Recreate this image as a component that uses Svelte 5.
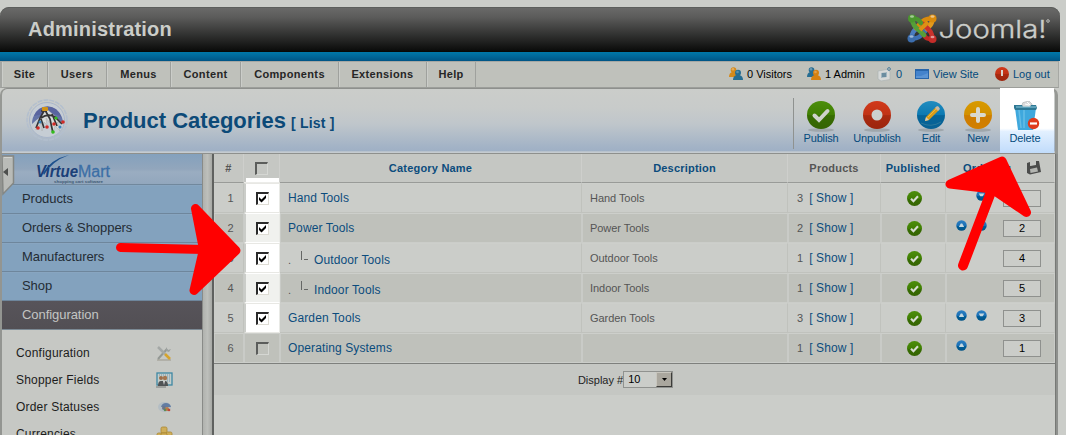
<script>
  const menu = [
    ['Site', 46], ['Users', 59], ['Menus', 64], ['Content', 70],
    ['Components', 98], ['Extensions', 88], ['Help', 49]
  ];
  const groups = ['Products', 'Orders & Shoppers', 'Manufacturers', 'Shop', 'Configuration'];
  const links = [
    ['Configuration', 'tools'], ['Shopper Fields', 'card'],
    ['Order Statuses', 'status'], ['Currencies', 'coins']
  ];
  const rows = [
    { name: 'Hand Tools', desc: 'Hand Tools', n: 3, order: '', up: false, down: true, on: true },
    { name: 'Power Tools', desc: 'Power Tools', n: 2, order: 2, up: true, down: true, on: true },
    { name: 'Outdoor Tools', desc: 'Outdoor Tools', n: 1, order: 4, child: true, on: true },
    { name: 'Indoor Tools', desc: 'Indoor Tools', n: 1, order: 5, child: true, on: true },
    { name: 'Garden Tools', desc: 'Garden Tools', n: 3, order: 3, up: true, down: true, on: true },
    { name: 'Operating Systems', desc: '', n: 1, order: 1, up: true, on: false }
  ];
</script>

{#snippet users(a, b)}
  <svg width="16" height="16" viewBox="0 0 16 16">
    <path d="M1 11q0-4 3-5h3q3 1 3 5z" fill={a} />
    <circle cx="5.5" cy="4" r="2.8" fill={a} />
    <circle cx="5" cy="3.3" r="1.3" fill="#fff" opacity=".3" />
    <path d="M5 14q0-4 3.500-5h3q3.500 1 3.500 5z" fill={b} />
    <circle cx="10" cy="6.800" r="3" fill={b} />
    <circle cx="9.500" cy="6" r="1.300" fill="#fff" opacity=".25" />
  </svg>
{/snippet}

{#snippet check()}
  <svg width="15" height="15" viewBox="0 0 28 28">
    <circle cx="14" cy="14" r="14" fill="url(#green)" />
    <path d="M7.500 14.500l4.500 4.500 8.500-9" fill="none" stroke="#d6dbd1" stroke-width="4" />
  </svg>
{/snippet}

{#snippet move(down)}
  <svg width="11" height="11" viewBox="0 0 11 11">
    <circle cx="5.500" cy="5.500" r="5.200" fill="url(#blue)" />
    {#if down}
      <path d="M2.700 3.500h5.600L6.700 6.200H4.300z" fill="#c5d8df" />
    {:else}
      <path d="M2.800 7l2-3.600h1.400L8.200 7z" fill="#c5d8df" />
    {/if}
  </svg>
{/snippet}

<svg width="0" height="0" class="defs">
  <defs>
    <linearGradient id="green" x2="0" y2="1"><stop offset="0" stop-color="#4c8e0b" /><stop offset=".5" stop-color="#407f03" /><stop offset=".52" stop-color="#376d02" /><stop offset="1" stop-color="#356402" /></linearGradient>
    <linearGradient id="red" x2="0" y2="1"><stop offset="0" stop-color="#d1391b" /><stop offset=".5" stop-color="#c13215" /><stop offset=".52" stop-color="#aa2a10" /><stop offset="1" stop-color="#9c250d" /></linearGradient>
    <linearGradient id="blue" x2="0" y2="1"><stop offset="0" stop-color="#2a7fc4" /><stop offset=".5" stop-color="#1c70b5" /><stop offset=".55" stop-color="#005f9c" /><stop offset="1" stop-color="#005285" /></linearGradient>
    <linearGradient id="cyan" x2="0" y2="1"><stop offset="0" stop-color="#218cbf" /><stop offset=".5" stop-color="#0c79b2" /><stop offset=".52" stop-color="#056499" /><stop offset="1" stop-color="#086295" /></linearGradient>
    <linearGradient id="gold" x2="0" y2="1"><stop offset="0" stop-color="#d89a00" /><stop offset=".5" stop-color="#d29000" /><stop offset=".52" stop-color="#ce7d00" /><stop offset="1" stop-color="#d27f00" /></linearGradient>
  </defs>
</svg>

<div class="page">
  <header>
    <h1>Administration</h1>
    <svg class="joomla" width="146" height="34" viewBox="0 0 146 34">
      <g fill="none" stroke-linecap="round" stroke-width="4.600">
        <path d="M4.500 25.500C13 26 14 22 21 15" stroke="#3d70b3" />
        <path d="M4.500 25.500C5 17 9 17 13 12" stroke="#4a7dc0" />
        <path d="M25.500 5.500C17 5 15 9 9 15" stroke="#d98a0c" />
        <path d="M25.500 5.500C25 13 23 12 20 16" stroke="#e39a1c" />
        <path d="M25.500 26C25 18 22 17 16 11" stroke="#c9322c" />
        <path d="M25.500 26C18 26 19 24 16 21" stroke="#c02a26" />
        <path d="M5 5.500C6 14 9 14 17 22" stroke="#559f38" />
        <path d="M5 5.500C12 5 12 8 14 10" stroke="#4b9631" />
        <path d="M13 17l8-8" stroke="#dc9014" stroke-width="4" stroke-linecap="butt" />
      </g>
      <circle cx="5" cy="5.500" r="4" fill="#4b962f" /><circle cx="25.500" cy="5.500" r="4" fill="#d98a0c" />
      <circle cx="4.500" cy="25.500" r="4" fill="#3c6ead" /><circle cx="25.500" cy="26" r="4" fill="#c52d29" />
      <g fill="#fff" opacity=".5"><ellipse cx="5" cy="3.500" rx="2" ry="1.200" /><ellipse cx="25.500" cy="3.500" rx="2" ry="1.200" /><ellipse cx="4.500" cy="23.500" rx="2" ry="1.200" /><ellipse cx="25.500" cy="24" rx="2" ry="1.200" /></g>
      <text x="31.500" y="24.500" textLength="108" lengthAdjust="spacingAndGlyphs">Joomla!</text>
      <circle cx="141" cy="8" r="1.300" fill="none" stroke="#c9cbc7" stroke-width=".9" />
    </svg>
  </header>
  <div class="stripe"></div>

  <nav>
    {#each menu as [label, w]}
      <a style="width: {w}px">{label}</a>
    {/each}
    <div class="status">
      <span class="visitors">{@render users('#d58a1a', '#266d92')}<b>0 Visitors</b></span>
      <span class="admin">{@render users('#266d92', '#d58110')}<b>1 Admin</b></span>
      <span class="mail">
        <svg width="16" height="16" viewBox="0 0 16 16"><path d="M1 5l9-1.500 3 2v8l-9 1.500-3-2z" fill="#d6d9d8" stroke="#adb4b5" stroke-width=".7" /><path d="M4 7l6-1v5l-6 1z" fill="#9fb4bf" /><path d="M5 8h4M5 10h4" stroke="#376681" /><circle cx="12" cy="3" r="1.400" fill="none" stroke="#50809d" /></svg>
        <b class="link">0</b>
      </span>
      <span class="view">
        <svg width="14" height="10" viewBox="0 0 14 10"><rect width="14" height="10" fill="#2865aa" /><rect x="1" y="2" width="12" height="7" fill="#4483cc" /><path d="M6 7l7-3v5H1V7z" fill="#5b94d4" /></svg>
        <b class="link">View Site</b>
      </span>
      <span class="out">
        <svg width="14" height="14" viewBox="0 0 14 14"><circle cx="7" cy="7" r="7" fill="url(#red)" /><rect x="6" y="3" width="2" height="6" fill="#d8d4cd" /></svg>
        <b class="link">Log out</b>
      </span>
    </div>
  </nav>

  <section class="toolbar">
    <svg class="emblem" width="46" height="44" viewBox="0 0 46 44">
      <circle cx="23" cy="21" r="20" fill="none" stroke="#b3bfce" stroke-width="1.500" stroke-dasharray="5 1" />
      <circle cx="23" cy="21" r="17.500" fill="#c6cdd4" stroke="#a9b6ca" />
      <path d="M8 25a15 16 0 0 1 31-1q-10-8-16-8T8 25" fill="#6474a8" />
      <path d="M10 17a14 14 0 0 1 27 1q-9-6-27-1" fill="#59649f" />
      <path d="M22 10l-7 12-3 9 5-7 1 8 2-9 3 3-1-7 4 5 3 10 2-7 5 5-3-9 6 2-7-7-7-6z" fill="#d8dcda" stroke="#aaa" stroke-width=".5" />
      <path d="M21 10l-5 9-4 10m5-10q7-5 14-1l7 7M21 11l5 9 3 14m-12-14l3 9m8-14l5 12m-10-15l-6 0" fill="none" stroke="#343436" stroke-width="1.700" />
      <rect x="18" y="8" width="6" height="4" rx="1" fill="#d09317" />
      <g fill="#d22b27"><circle cx="14" cy="29" r="1.800" /><circle cx="23" cy="28" r="1.800" /><circle cx="30" cy="25" r="1.800" /><circle cx="39" cy="23" r="1.800" /></g>
      <g fill="#32bd1c"><circle cx="32" cy="19" r="1.600" /><circle cx="29" cy="33" r="1.800" /></g>
      <g fill="#3a83bd"><circle cx="16" cy="23" r="1.500" /><circle cx="36" cy="28" r="1.500" /></g>
    </svg>
    <h2>Product Categories <small>[ List ]</small></h2>
    <div class="tools">
      <a style="width: 52px">
        <svg width="30" height="32" viewBox="0 0 30 32"><ellipse cx="15" cy="29" rx="13" ry="1.800" fill="#8d9497" opacity=".6" /><circle cx="15" cy="14" r="14" fill="url(#green)" /><path d="M8.500 14.500l4.500 4.500 8.500-9" fill="none" stroke="#ced3ca" stroke-width="4" stroke-linecap="round" /></svg>
        <span>Publish</span>
      </a>
      <a style="width: 60px">
        <svg width="30" height="32" viewBox="0 0 30 32"><ellipse cx="15" cy="29" rx="13" ry="1.800" fill="#8d9497" opacity=".6" /><circle cx="15" cy="14" r="14" fill="url(#red)" /><circle cx="15" cy="14" r="5.500" fill="#ccd0ce" /></svg>
        <span>Unpublish</span>
      </a>
      <a style="width: 48px">
        <svg width="30" height="32" viewBox="0 0 30 32"><ellipse cx="15" cy="29" rx="13" ry="1.800" fill="#8d9497" opacity=".6" /><circle cx="15" cy="14" r="14" fill="url(#cyan)" /><path d="M5 22q10 5 20-1" fill="none" stroke="#2c789b" /><path d="M9 20l1-4L20 6l3 3-10 10z" fill="#d99c18" /><path d="M12 16l9-9" stroke="#edb83e" /><path d="M19 7l2-2q2 0 3 3l-2 2z" fill="#c7b9a6" /><path d="M9 20l1-4 3 3z" fill="#d7cbb2" /></svg>
        <span>Edit</span>
      </a>
      <a style="width: 46px">
        <svg width="30" height="32" viewBox="0 0 30 32"><ellipse cx="15" cy="29" rx="13" ry="1.800" fill="#8d9497" opacity=".6" /><circle cx="15" cy="14" r="14" fill="url(#gold)" /><path d="M15 8v12M9 14h12" stroke="#d9d9cf" stroke-width="4" stroke-linecap="round" /></svg>
        <span>New</span>
      </a>
      <a class="lit" style="width: 54px">
        <svg width="30" height="32" viewBox="0 0 30 32"><path d="M12 4q0-3 3-3l4-1 3 3q1 2-1 3h-8z" fill="#dadada" stroke="#aeb1b3" stroke-width=".6" /><path d="M15 3l4 1M17 1l3 3" stroke="#fff" /><path d="M5 7h21l-3 22H8z" fill="#3fa8dd" /><path d="M9 9l2 18M14 9v18" stroke="#66bde6" stroke-width="1.500" /><path d="M4 4h8l1 2h7l1-2h5l1 3-1 2H5L4 7z" fill="#2e7894" /><path d="M6 6h20" stroke="#8cc9dd" /><circle cx="23.500" cy="22.500" r="5.700" fill="#df3b1e" /><path d="M20 22.500h7" stroke="#fff" stroke-width="2.200" /></svg>
        <span>Delete</span>
      </a>
    </div>
  </section>

  <main>
    <aside>
      <div class="brand">
        <svg width="110" height="30" viewBox="0 0 110 30">
          <path d="M16 18Q24 4 42 0q-17 6-25 20z" fill="#1c4f8c" />
          <text x="9" y="22" class="vm1" textLength="42" lengthAdjust="spacingAndGlyphs">Virtue</text>
          <text x="51" y="22" class="vm2" textLength="32" lengthAdjust="spacingAndGlyphs">Mart</text>
          <text x="27" y="27.500" class="vm3" textLength="49" lengthAdjust="spacingAndGlyphs">shopping cart software</text>
        </svg>
      </div>
      {#each groups as g, i}
        <div class="group" class:active={i === 4}>{g}</div>
      {/each}
      <div class="links">
        {#each links as [label, icon]}
          <div class="item">
            <span>{label}</span>
            <svg width="17" height="16" viewBox="0 0 17 16">
              {#if icon === 'tools'}
                <path d="M1 15h14" stroke="#aaa99f" stroke-width="1.500" /><path d="M2 14L11 4" stroke="#939894" stroke-width="2" /><path d="M10 2l2 3 3-1-2 3-3-1z" fill="#9ca19f" /><path d="M2 2l7 7" stroke="#a4a8a6" stroke-width="2.500" /><path d="M9 9l5 5" stroke="#d5a42e" stroke-width="2.600" />
              {:else if icon === 'card'}
                <rect x="1" y="1" width="15" height="12" fill="#c4cdca" stroke="#3e88a4" stroke-width="1.300" /><path d="M3 3h11M11 5h3M11 7h4M11 9h3" stroke="#7197b0" stroke-dasharray="1 1" /><circle cx="5" cy="6" r="2" fill="#9b6d4b" /><circle cx="9" cy="6" r="2.200" fill="#a4764f" /><path d="M2 14q0-5 3-5h4q3 0 3 5z" fill="#4f5355" /><path d="M7 9l1 4 1-4z" fill="#ddd" /><path d="M0 15h10" stroke="#777b79" />
              {:else if icon === 'status'}
                <ellipse cx="8.500" cy="8" rx="6.500" ry="5" fill="#b3bdc4" /><path d="M5 8q1-4 5-4t5 4z" fill="#627ca2" /><circle cx="8" cy="9" r="2" fill="#6a7489" /><circle cx="11" cy="10" r="2" fill="#b57a45" /><circle cx="13" cy="11" r="1.300" fill="#bd453b" /><circle cx="9" cy="11" r="1.200" fill="#5d8c52" />
              {:else}
                <g fill="#cfae59" stroke="#a98630" stroke-width=".8"><rect x="5" y="1" width="6" height="6" rx="1.500" /><rect x="10" y="6" width="6" height="9" rx="1.500" /><rect x="1" y="7" width="6" height="8" rx="1.500" /><rect x="5" y="7" width="6" height="9" rx="1.500" /></g>
              {/if}
            </svg>
          </div>
        {/each}
      </div>
    </aside>
    <div class="gutter"></div>

    <div class="grid">
      <div class="row head">
        <div>#</div>
        <div class="all"><i class="box"></i></div>
        <div class="blue">Category Name</div>
        <div class="blue">Description</div>
        <div>Products</div>
        <div class="blue">Published</div>
        <div class="blue ordering">
          <span>Ordering</span>
          <svg width="14" height="14" viewBox="0 0 14 14"><path d="M0 2l3-1v4l6-1V0h3l2 11-11 2.500L0 12z" fill="#4b4c4b" /><path d="M3.500 1l5-1v3.500l-5 1z" fill="#c6c8c5" /><path d="M3 8l7-1.500 1 4-7.500 1.500z" fill="#b3b5b1" /></svg>
        </div>
      </div>
      {#each rows as r, i}
        <div class="row" class:odd={i % 2 === 1}>
          <div class="num">{i + 1}</div>
          <div class="pick" class:lit={r.on}>
            <i class="box">
              {#if r.on}
                <svg width="9" height="9" viewBox="0 0 9 9"><path d="M1 3l2.500 2.500L8 1v3L3.500 8.500 1 6z" fill="#000" /></svg>
              {/if}
            </i>
          </div>
          <div class="name" class:child={r.child}>
            {#if r.child}<span class="dot">.</span><i class="branch"></i>{/if}<a>{r.name}</a>
          </div>
          <div class="desc">{r.desc}</div>
          <div class="count"><span>{r.n}</span><a>[ Show ]</a></div>
          <div class="pub">{@render check()}</div>
          <div class="order">
            <span class="slot">{#if r.up}{@render move(false)}{/if}</span>
            <span class="slot">{#if r.down}{@render move(true)}{/if}</span>
            <span class="field">{r.order}</span>
          </div>
        </div>
      {/each}
      <div class="foot">
        <span>Display #</span>
        <div class="select"><span>10</span><i><svg width="5" height="3" viewBox="0 0 5 3"><path d="M0 0h5L2.500 3z" /></svg></i></div>
      </div>
    </div>
    <div class="edge"></div>
  </main>

  <svg class="tab" width="14" height="42" viewBox="0 0 14 42">
    <path d="M0 1h11.500v27L1 39z" fill="#b9bbb7" stroke="#858783" stroke-width="1.500" />
    <path d="M2 2.500h8" stroke="#d2d4d0" />
    <path d="M6 13v8l-5-4z" fill="#4d4f4d" />
  </svg>
  <svg class="arrows" width="1066" height="435" viewBox="0 0 1066 435">
    <g fill="#f00" stroke="#f00" stroke-width="9" stroke-linejoin="round" stroke-linecap="round">
      <path d="M120.500 247.500L203 249.500" />
      <path d="M195.500 208.500L236 250.500 194 290.500 203.500 249.500z" />
      <path d="M963 265.500L991 192" stroke-width="10" />
      <path d="M950 184L1002 161 1026.500 212.500 992 189z" />
    </g>
  </svg>
</div>

<style>
  :global(body) { background: #cbcdc9; overflow: hidden; }
  .page { position: relative; width: 1066px; height: 435px; overflow: hidden; padding-top: 7px; box-sizing: border-box; font: 12px "Liberation Sans", Arial, sans-serif; color: #222; background: #cbcdc9; }
  .defs { position: absolute; }
  svg { display: block; flex: none; }
  header { width: 1060px; height: 45px; border-radius: 9px 9px 0 0; background: linear-gradient(#6b6b6a, #5c5c5b 22%, #0c0d0c 96%, #050605); display: flex; align-items: center; justify-content: space-between; box-shadow: inset 0 1px #5c5e5c; }
  h1 { margin: 0 0 1px 28px; font-size: 20px; line-height: 24px; color: #cbcdc9; letter-spacing: .2px; }
  .joomla { margin: 1px 7px 0 0; }
  .joomla text { font: 300 24px Inter, sans-serif; fill: #cbcdc9; stroke: #cbcdc9; stroke-width: .35px; }
  .stripe { width: 1060px; height: 9px; background: linear-gradient(#0077a8, #006a9c 40%, #005585); }
  nav { width: 1059px; height: 27px; box-sizing: border-box; border: 1px solid #a6a8a4; border-left: 2px solid #a4a6a2; border-bottom: 1px solid #9c9e9a; background: #bfc1bb; display: flex; line-height: 24px; }
  nav a { box-sizing: border-box; border-right: 1px solid #9fa19d; box-shadow: inset 1px 0 #cbcdc9; text-align: center; font-weight: bold; font-size: 11px; letter-spacing: .35px; color: #262626; height: 25px; }
  .status { margin-left: auto; display: flex; align-items: center; width: 330px; height: 24px; }
  .status span { display: flex; align-items: center; gap: 3px; white-space: nowrap; }
  .status b { font-weight: normal; font-size: 11px; color: #000; }
  .status b.link { color: #034a7c; }
  .visitors { width: 78px; } .admin { width: 71px; } .mail { width: 38px; } .view { width: 79px; }
  .status .view, .status .out { gap: 4px; }
  .status .out svg { margin-left: 1px; }
  .toolbar { width: 1058px; height: 66px; box-sizing: border-box; border: 1px solid #8e908d; border-left: 2px solid #969894; border-right: 3px solid #969894; border-radius: 7px 7px 0 0; background: linear-gradient(#cbcdca, #c8cbca 30%, #bfc6cb 55%, #a3b3c6 90%, #9fb0c5 97%, #c5cbd0 98%); display: flex; align-items: flex-start; }
  .emblem { margin: 10px 0 0 22px; }
  h2 { margin: 18px 0 0 13px; font-size: 22px; line-height: 28px; color: #0c4a78; white-space: nowrap; }
  small { font-size: 14px; letter-spacing: .2px; margin-left: -1px; }
  .tools { margin: 0 1px 0 auto; display: flex; }
  .tools::before { content: ''; width: 1px; height: 51px; margin-top: 9px; background: #8f9290; }
  .tools a { height: 64px; display: flex; flex-direction: column; align-items: center; padding-top: 12px; box-sizing: border-box; color: #034a7c; position: relative; left: 1px; }
  .tools span { font-size: 11px; line-height: 12px; margin-top: -1px; letter-spacing: -.15px; }
  .tools .lit { background: linear-gradient(#fff, #fff 62%, #e2f0ff 67%, #c1dcfb); margin-top: -1px; height: 65px; padding-top: 13px; padding-right: 4px; left: 0; }
  main { display: flex; width: 1060px; height: 281px; }
  aside { width: 203px; box-sizing: border-box; border-left: 2px solid #939591; border-right: 1px solid #898b88; background: #c6c8c4; height: 300px; }
  .brand { height: 31px; box-sizing: border-box; border-bottom: 1px solid #71889d; background: linear-gradient(#84a1bd, #92a6bc 50%, #9aadc1 60%, #92a7bd); padding: 1px 0 0 25px; }
  .vm1 { font: italic bold 16px "Liberation Sans", sans-serif; fill: #1b3f78; }
  .vm2 { font: 16px "Liberation Sans", sans-serif; fill: #3c6fa6; stroke: #3c6fa6; stroke-width: .3px; }
  .vm3 { font: bold 4px "Liberation Sans", sans-serif; fill: #415a75; }
  .group { height: 29px; box-sizing: border-box; border-bottom: 1px solid #6e869c; box-shadow: inset 0 1px #88a5c0; background: #83a2be; padding-left: 20px; line-height: 27px; font-size: 13px; letter-spacing: -.06px; color: #242c34; }
  .group.active { background: linear-gradient(#57545a, #524f54); color: #c3c5c3; box-shadow: none; border-color: #7b8994; }
  .links { padding-top: 9px; }
  .item { height: 27px; display: flex; align-items: center; justify-content: space-between; padding: 0 29px 0 14px; letter-spacing: .2px; color: #1c1c1c; }
  .gutter { width: 11px; box-sizing: border-box; border-right: 2px solid #5f615f; background: linear-gradient(90deg, #b0b2ae, #bdbfbb 50%, #a7a9a5); }
  .grid { width: 841px; background: #cbcdc9; color: #555; }
  .row { display: grid; grid-template-columns: 30px 36px 302px 206px 93px 65px 109px; height: 30px; }
  .row > div { box-sizing: border-box; border-right: 1px solid #c0c2bd; border-bottom: 1px solid #c0c2bd; border-top: 1px solid #cdcfcb; display: flex; align-items: center; justify-content: center; }
  .row.odd > div { background: #bfc1bb; border-right-color: #c9cbc7; border-bottom-color: #cbcdc9; box-shadow: inset 1px 0 #c9cbc7; }
  .row.head { height: 29px; font-weight: bold; font-size: 11px; letter-spacing: .2px; }
  .row.head > div { background: #c5c7c3; border-bottom: 1px solid #999b98; border-top: 0; border-right-color: #cecfcc; }
  .row.head > .all { background: linear-gradient(#fff, #fff) 2px 100% / 100% 4px no-repeat #c5c7c3; border-bottom-color: #ecece9; }
  .row .blue { color: #0b4c7d; }
  .row.head > .ordering { justify-content: flex-start; padding-left: 17px; gap: 16px; }
  .num { font-size: 11px; color: #565656; padding-left: 4px; }
  .box { width: 13px; height: 13px; box-sizing: border-box; border: 1px solid #d5d7d3; border-top: 2px solid #5b5d5b; border-left: 2px solid #5b5d5b; display: block; }
  .row > .pick { padding-left: 2px; }
  .row > .lit, .row.odd > .lit { background: #fff; border-color: #e8e8e4; border-left: 2px solid #cbcdc9; border-right: 1px solid #e9eae6; box-shadow: none; padding-left: 0; }
  .row.odd > .lit { background: #f0f1ee; border-top-color: #fff; border-bottom-color: #fff; }
  .lit .box { border-color: #2a2a2a #dedcd4 #dedcd4 #2a2a2a; background: #fff; }
  .row > .name, .row > .desc { justify-content: flex-start; padding-left: 8px; }
  .name a, .count a { color: #0b4c7d; font-size: 12px; letter-spacing: .12px; }
  .name { padding-bottom: 1px; }
  .row > .child { padding-top: 3px; padding-bottom: 0; }
  .dot { font-size: 11px; width: 13px; }
  .branch { width: 7px; height: 9px; margin: -8px 6px 0 0; box-sizing: border-box; border-left: 1px solid #656765; background: linear-gradient(#656765, #656765) 2px 8px / 5px 1px no-repeat; }
  .desc { font-size: 11px; letter-spacing: -.05px; }
  .row > .count { justify-content: flex-start; padding-left: 9px; gap: 6px; padding-bottom: 1px; }
  .count span { font-size: 11px; }
  .row > .pub { padding-left: 3px; }
  .row > .order { justify-content: flex-start; padding-left: 10px; border-right-color: #c6c8c4; }
  .slot { width: 20px; height: 16px; }
  .field { margin-left: 7px; width: 38px; height: 17px; box-sizing: border-box; border: 1px solid #8f918e; color: #000; text-align: center; line-height: 15px; font-size: 11px; background: #cbcdc9; }
  .foot { height: 32px; box-sizing: border-box; border-top: 1px solid #7e807d; background: #c5c7c3; display: flex; align-items: center; justify-content: center; color: #1e1e1e; font-size: 11px; padding-right: 18px; }
  .select { width: 50px; height: 17px; box-sizing: border-box; border: 1px solid #90928f; display: flex; justify-content: space-between; color: #000; line-height: 15px; background: #cbcdc9; }
  .select span { padding-left: 4px; }
  .select i { width: 16px; height: 15px; box-sizing: border-box; background: #aaa79e; border: 1px solid; border-color: #c8c6be #3c3c39 #3c3c39 #c8c6be; display: grid; place-items: center; }
  .edge { width: 3px; background: #8e908d; border-left: 1px solid #777976; box-sizing: border-box; }
  .tab { position: absolute; left: 2px; top: 155px; }
  .arrows { position: absolute; left: 0; top: 0; }
</style>
